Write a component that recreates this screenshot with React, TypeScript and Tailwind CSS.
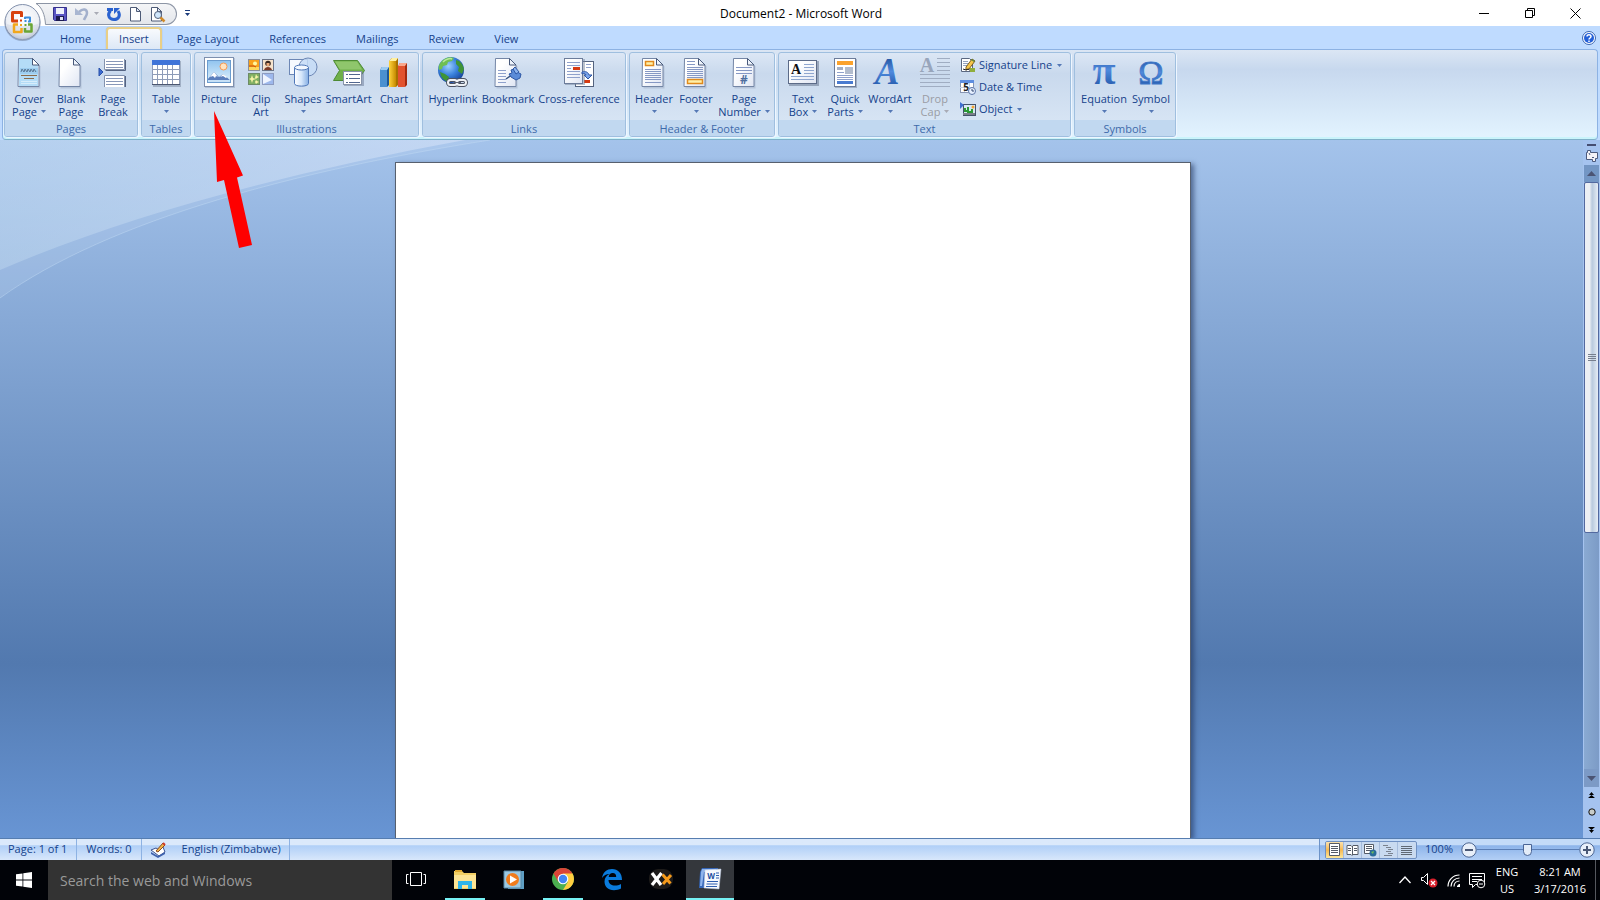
import type { ReactNode } from "react";
import { clsx } from "clsx";

/* ---------- small shared pieces ---------- */

const Caret = ({ muted = false }: { muted?: boolean }) => (
  <svg width="5" height="3" viewBox="0 0 5 3" className={clsx("inline-block shrink-0", muted ? "text-[#a9abb5]" : "text-[#5578b5]")} aria-hidden="true">
    <path d="M0 0h5L2.5 3z" fill="currentColor" />
  </svg>
);

const Icon = ({ children, size = 32 }: { children: ReactNode; size?: number }) => (
  <svg width={size} height={size} viewBox={`0 0 ${size} ${size}`} className="block shrink-0 overflow-visible" aria-hidden="true">
    {children}
  </svg>
);

const Defs = () => (
  <svg className="absolute h-0 w-0" aria-hidden="true">
    <defs>
      <linearGradient id="paper" x1="0" y1="0" x2="1" y2="1">
        <stop offset="0.3" stopColor="#ffffff" />
        <stop offset="1" stopColor="#dfe5f3" />
      </linearGradient>
      <linearGradient id="glyph" x1="0" y1="0" x2="0" y2="1">
        <stop offset="0.2" stopColor="#2a5ba8" />
        <stop offset="0.5" stopColor="#4f8ade" />
        <stop offset="0.8" stopColor="#2c62b4" />
      </linearGradient>
      <linearGradient id="gold" x1="0" y1="0" x2="1" y2="0">
        <stop offset="0" stopColor="#ffd33d" />
        <stop offset="1" stopColor="#c58a00" />
      </linearGradient>
      <linearGradient id="cyl" x1="0" y1="0" x2="1" y2="0">
        <stop offset="0" stopColor="#ffffff" />
        <stop offset="0.5" stopColor="#d5e6fb" />
        <stop offset="1" stopColor="#85aee3" />
      </linearGradient>
      <linearGradient id="sky" x1="0" y1="0" x2="0" y2="1">
        <stop offset="0" stopColor="#8fc3ef" />
        <stop offset="1" stopColor="#e2f3fd" />
      </linearGradient>
      <radialGradient id="globe" cx="0.4" cy="0.35" r="0.7">
        <stop offset="0" stopColor="#9dd0ff" />
        <stop offset="0.5" stopColor="#3b83dd" />
        <stop offset="1" stopColor="#123f94" />
      </radialGradient>
      <radialGradient id="orb" cx="0.5" cy="0.4" r="0.65">
        <stop offset="0" stopColor="#ffffff" />
        <stop offset="0.7" stopColor="#eceff5" />
        <stop offset="1" stopColor="#a9b4ca" />
      </radialGradient>
      <linearGradient id="bar" x1="0" y1="0" x2="0" y2="1">
        <stop offset="0" stopColor="#f4f5f7" />
        <stop offset="1" stopColor="#e3e6eb" />
      </linearGradient>
    </defs>
  </svg>
);

const Sheet = ({ x = 5, y = 2 }: { x?: number; y?: number }) => (
  <g transform={`translate(${x} ${y})`}>
    <path d="M1.5 1.5h14l7 7v22h-21z" fill="#9aa7bf" opacity="0.45" />
    <path d="M0.5 0.5h14l6.500 6.500v21.500h-21z" fill="url(#paper)" stroke="#7486a6" />
    <path d="M14.500 0.500v6.500h6.500z" fill="#eef3fb" stroke="#48597a" />
  </g>
);

const Lines = ({ x, y, w, n, gap = 3, color = "#7b8fbd" }: { x: number; y: number; w: number; n: number; gap?: number; color?: string }) => (
  <g fill={color}>
    {Array.from({ length: n }, (_, i) => (
      <rect key={i} x={x} y={y + i * gap} width={w} height="1" />
    ))}
  </g>
);

/* ---------- ribbon icons ---------- */

const CoverPageIcon = () => (
  <Icon>
    <Sheet />
    <path d="M6 3h13v6h6v21H6z" fill="#b4dcf7" />
    <path d="M19.500 2.500v6.500h6.500z" fill="#fff" stroke="#48597a" />
    <path d="M7 12h18v6H7z" fill="#9dcdef" />
    <path d="M8 16l1-3 2 3 1-3 2 3 1-3 2 3 1-3 2 3 1-3 2 3" fill="none" stroke="#5b7896" />
    <Lines x={8} y={19} w={16} n={1} color="#8a6b4c" />
    <Lines x={11} y={22} w={10} n={1} color="#8a6b4c" />
    <Lines x={8} y={25} w={16} n={2} gap={2} color="#d7ecfa" />
  </Icon>
);

const BlankPageIcon = () => (
  <Icon>
    <Sheet x={4} />
  </Icon>
);

const PageBreakIcon = () => (
  <Icon>
    <path d="M7.500 3v10.500h20V3" fill="#fff" stroke="#8392ae" />
    <path d="M28.500 4v10.500h-20" fill="none" stroke="#556482" />
    <Lines x={9} y={5} w={17} n={3} color="#8797b8" />
    <path d="M7.500 31v-11.500h20v11.500" fill="#fff" stroke="#8392ae" />
    <path d="M28.500 20v11" fill="none" stroke="#556482" />
    <Lines x={9} y={22} w={17} n={3} color="#8797b8" />
    <path d="M2 12l4 4-4 4z" fill="#3c6bd0" stroke="#2850a8" />
  </Icon>
);

const TableIcon = () => (
  <Icon>
    <path d="M3 5h28v26H3z" fill="#75839c" opacity="0.5" />
    <rect x="2" y="4" width="28" height="25" fill="#fff" />
    <rect x="2" y="4" width="28" height="5" fill="#3f74d8" />
    <path d="M2.500 9v19.500h27V9M2 13.500h28M2 18.500h28M2 23.500h28M7.500 9v20M12.500 9v20M17.500 9v20M22.500 9v20" fill="none" stroke="#8e9cb8" />
    <path d="M2 28.500h28" stroke="#4b5670" />
  </Icon>
);

const PictureIcon = () => (
  <Icon>
    <rect x="2" y="2" width="30" height="30" fill="#8391ad" opacity="0.4" />
    <rect x="1.500" y="1.500" width="29" height="29" fill="#fff" stroke="#7d8fae" />
    <rect x="4" y="4" width="24" height="23" fill="url(#sky)" />
    <circle cx="20.500" cy="10.500" r="3.500" fill="#ffe3c0" stroke="#f59a55" />
    <path d="M4 24l7-8 5 5 4-3 8 7v2H4z" fill="#5b7fbd" />
    <path d="M11 16l-4 5 3-1 2 2 1-2 2 1zM20 18l-3 3 3-1 3 2 1-1z" fill="#fff" />
    <rect x="4.500" y="4.500" width="23" height="22" fill="none" stroke="#6b9ccf" />
    <path d="M5 24h22v2H5z" fill="#c6e0f6" />
  </Icon>
);

const ClipArtIcon = () => (
  <Icon>
    <rect x="3.500" y="3.500" width="11" height="11" fill="#f9a11b" stroke="#8a8f9c" />
    <circle cx="10" cy="7.500" r="2" fill="#fff6a0" />
    <path d="M4 11h10v3H4z" fill="#ffd75a" />
    <path d="M4 10h5l2 1" stroke="#c54b0c" fill="none" />
    <rect x="17.500" y="3.500" width="11" height="11" fill="#f6e3cc" stroke="#6b7488" />
    <circle cx="23" cy="7.500" r="2.800" fill="#3c2a22" />
    <path d="M21.500 7h3v3h-3z" fill="#e9a878" />
    <path d="M19 14c1-4 7-4 8 0z" fill="#7c3b28" />
    <rect x="3.500" y="17.500" width="11" height="11" fill="#7fae62" stroke="#6d8a66" />
    <path d="M7 19l1 3 3 1-3 1-1 3-1-3-2-1 2-1zM11 18l1 2 2 1-2 1-1 1-1-1zM11 24l1 1 2 1-2 1-1 1-1-2z" fill="#f7f3a6" />
    <rect x="17.500" y="17.500" width="11" height="11" fill="#9db8ec" stroke="#8d9bc0" />
    <path d="M18 18l9 6-9 4z" fill="#eef4ff" />
  </Icon>
);

const ShapesIcon = () => (
  <Icon>
    <rect x="2.500" y="3.500" width="18" height="15" fill="#f6f9fe" stroke="#6d87b5" />
    <circle cx="21" cy="11" r="9" fill="#c5dcf7" fillOpacity="0.85" stroke="#6d87b5" />
    <path d="M7.500 11.500v16c0 3.500 14 3.500 14 0v-16z" fill="url(#cyl)" stroke="#4f77b8" />
    <ellipse cx="14.500" cy="11.500" rx="7" ry="2.500" fill="#f3f8ff" stroke="#4f77b8" />
  </Icon>
);

const SmartArtIcon = () => (
  <Icon>
    <path d="M0.500 4.500h24l7 10-7 10h-24l6-10z" fill="#6fb04a" stroke="#4d8a34" />
    <path d="M2 5.500h22l5 8H7z" fill="#8fc66c" />
    <rect x="11" y="16" width="20" height="14" fill="#6a7894" opacity="0.5" />
    <rect x="10.500" y="15.500" width="18" height="13" fill="#fff" stroke="#8894aa" />
    <Lines x={13} y={18} w={2} n={3} gap={4} color="#52678f" />
    <Lines x={16} y={18} w={11} n={3} gap={4} color="#52678f" />
  </Icon>
);

const ChartIcon = () => (
  <Icon>
    <path d="M2 14l2-3h7v18l-2 2H2z" fill="#1d5796" />
    <path d="M2 14h7v17H2z" fill="#4a90d0" />
    <path d="M2 14l2-3h7l-2 3z" fill="#9bcbf2" />
    <path d="M11 5l3-3h6v27l-2 2h-7z" fill="#a87000" />
    <path d="M11 5h7v26h-7z" fill="url(#gold)" />
    <path d="M11 5l3-3h6l-2 3z" fill="#fff0a0" />
    <path d="M20 10l2-3h7v22l-2 2h-7z" fill="#a32a10" />
    <path d="M20 10h7v21h-7z" fill="#e2532f" />
    <path d="M20 10l2-3h7l-2 3z" fill="#f9a78c" />
  </Icon>
);

const HyperlinkIcon = () => (
  <Icon>
    <circle cx="14" cy="14" r="13" fill="url(#globe)" />
    <path d="M4 6c3-4 9-6 13-4l-2 3-4 1-1 3-4 1-1 3-3 1c-1-3 0-6 2-8z" fill="#6fbf52" />
    <path d="M19 4c5 1 7 5 8 9l-2 5-4-3 1-4-3-3zM3 16l5 2 4 3-1 5c-5-2-7-5-8-10z" fill="#3f9437" />
    <path d="M6 6c3-3 7-4 9-3" stroke="#b9e89b" strokeWidth="1.500" fill="none" />
    <g fill="none" stroke="#4b5262" strokeWidth="4">
      <rect x="11" y="24" width="9" height="5" rx="2.500" />
      <rect x="20" y="24" width="9" height="5" rx="2.500" />
    </g>
    <g fill="none" stroke="#eef1f5" strokeWidth="2">
      <rect x="11" y="24" width="9" height="5" rx="2.500" />
      <rect x="20" y="24" width="9" height="5" rx="2.500" />
    </g>
    <path d="M17 26.500h7" stroke="#596072" />
  </Icon>
);

const BookmarkIcon = () => (
  <Icon>
    <Sheet x={3} />
    <Lines x={6} y={14} w={8} n={5} color="#8fa1cc" />
    <path d="M14 23l7-5" stroke="#37537f" strokeWidth="1.500" />
    <path d="M19 14l3-1 5 4 2 1-1 4-4 2-5-3-2-3 3-1z" fill="#5b8bd8" stroke="#2e57a5" />
    <path d="M23 11l4 5-3 2-3-5z" fill="#8db4ee" stroke="#2e57a5" />
  </Icon>
);

const CrossReferenceIcon = () => (
  <Icon>
    <rect x="12.500" y="5.500" width="18" height="25" fill="#fff" stroke="#54637f" />
    <Lines x={23} y={8} w={5} n={2} color="#8fa1cc" />
    <rect x="21" y="24" width="6" height="3" fill="#d63a12" />
    <rect x="2" y="3" width="20" height="26" fill="#75839c" opacity="0.5" />
    <rect x="1.500" y="2.500" width="18" height="25" fill="url(#paper)" stroke="#6c7c9a" />
    <Lines x={4} y={6} w={13} n={2} color="#8fa1cc" />
    <Lines x={4} y={15} w={13} n={3} color="#8fa1cc" />
    <Lines x={4} y={12} w={4} n={1} color="#8fa1cc" />
    <rect x="10" y="11" width="7" height="3" fill="#d63a12" />
    <path d="M19 16c4-1 6 0 7 3h3l-4 4-4-4h2c-1-2-2-2-4-1z" fill="#7ba4ea" stroke="#2e57a5" />
  </Icon>
);

const HeaderIcon = () => (
  <Icon>
    <Sheet x={4} />
    <Lines x={7} y={13} w={16} n={6} color="#8698c4" gap={2} />
    <Lines x={7} y={26} w={16} n={1} color="#8698c4" />
    <rect x="7.500" y="5.500" width="8" height="4" fill="#fff0a8" stroke="#e08a1c" strokeWidth="1.500" />
  </Icon>
);

const FooterIcon = () => (
  <Icon>
    <Sheet x={4} />
    <Lines x={7} y={5} w={8} n={2} color="#8698c4" />
    <Lines x={7} y={11} w={16} n={6} gap={2} color="#8698c4" />
    <rect x="7.500" y="23.500" width="15" height="4" fill="#fff0a8" stroke="#e08a1c" strokeWidth="1.500" />
  </Icon>
);

const PageNumberIcon = () => (
  <Icon>
    <Sheet x={5} />
    <Lines x={8} y={11} w={16} n={3} color="#8698c4" />
    <text x="16" y="28" textAnchor="middle" fontSize="12" fontWeight="bold" fill="#4f6f9f">#</text>
  </Icon>
);

const TextBoxIcon = () => (
  <Icon>
    <rect x="2" y="5" width="30" height="25" fill="#5f6d87" opacity="0.5" />
    <rect x="1.500" y="4.500" width="28" height="23" fill="url(#paper)" stroke="#5c6b88" />
    <text x="9" y="18" textAnchor="middle" fontSize="14" fontWeight="bold" fontFamily="Liberation Serif, serif" fill="#111">A</text>
    <Lines x={17} y={8} w={10} n={4} color="#8fa6cf" />
    <Lines x={4} y={20} w={23} n={2} color="#8fa6cf" />
  </Icon>
);

const QuickPartsIcon = () => (
  <Icon>
    <rect x="6" y="3" width="22" height="29" fill="#75839c" opacity="0.5" />
    <rect x="5.500" y="2.500" width="21" height="28" fill="#fff" stroke="#6c7c9a" />
    <rect x="8" y="5" width="16" height="4" fill="#fba22c" />
    <rect x="8" y="11" width="6" height="3" fill="#a5b0c4" />
    <rect x="16" y="11" width="8" height="7" fill="#b2bccd" />
    <Lines x={8} y={16} w={7} n={1} color="#8fa1cc" />
    <Lines x={8} y={19} w={16} n={3} gap={2} color="#8fa1cc" />
    <rect x="8" y="25" width="16" height="3" fill="#4a7bd0" />
  </Icon>
);

const WordArtIcon = () => (
  <Icon>
    <text x="13" y="28" textAnchor="middle" fontSize="37" fontWeight="bold" fontStyle="italic" fontFamily="Liberation Serif, serif" fill="url(#glyph)">A</text>
  </Icon>
);

const DropCapIcon = () => (
  <Icon>
    <text x="8" y="16" textAnchor="middle" fontSize="20" fontWeight="bold" fontFamily="Liberation Serif, serif" fill="#98a5bb">A</text>
    <Lines x={18} y={2} w={13} n={4} gap={4} color="#a0adc2" />
    <Lines x={1} y={18} w={30} n={4} gap={4} color="#a0adc2" />
  </Icon>
);

const EquationIcon = () => (
  <Icon>
    <text x="16" y="28" textAnchor="middle" fontSize="42" fontWeight="bold" fontFamily="Liberation Serif, serif" fill="url(#glyph)">π</text>
  </Icon>
);

const SymbolIcon = () => (
  <Icon>
    <text x="16" y="28" textAnchor="middle" fontSize="34" fontFamily="Liberation Serif, serif" fill="url(#glyph)" stroke="#3f78c8" strokeWidth="0.800">Ω</text>
  </Icon>
);

const SignatureIcon = () => (
  <Icon size={16}>
    <path d="M1.500 1.500h8l3 3v10h-11z" fill="#fff" stroke="#5a6780" />
    <Lines x={3} y={4} w={5} n={3} gap={2} color="#93a2bf" />
    <path d="M6 10l6-8 3 2-6 8-3 1z" fill="#f6c64a" stroke="#7a5a20" />
    <path d="M12 2l3 2-1 1-3-2z" fill="#5d8a3c" />
    <path d="M3 12l3 1 2-1 3 2h4" stroke="#222" fill="none" />
    <rect x="10" y="11" width="5" height="4" fill="#8fae3c" />
  </Icon>
);

const DateIcon = () => (
  <Icon size={16}>
    <rect x="0.500" y="1.500" width="13" height="12" fill="#fff" stroke="#8896b3" />
    <rect x="0" y="1" width="14" height="3" fill="#5e8ee0" />
    <path d="M0 8.500h13M4.500 4v9M9.500 4v9" stroke="#c4cee0" />
    <text x="6" y="12" textAnchor="middle" fontSize="10" fontWeight="bold" fill="#222">5</text>
    <circle cx="12" cy="12" r="3.500" fill="#e6f0ff" stroke="#5d76a8" />
    <path d="M12 10v2h2" stroke="#33476f" fill="none" />
  </Icon>
);

const ObjectIcon = () => (
  <Icon size={16}>
    <rect x="3.500" y="3.500" width="12" height="11" fill="#d8e8f2" stroke="#44536b" />
    <path d="M0 1l4 3-4 4z" fill="#3f6fd0" />
    <circle cx="13" cy="6" r="1.500" fill="#f4a233" />
    <path d="M8 13V6M8 10H5V7M8 11h4V8" stroke="#2c9a35" strokeWidth="2" fill="none" />
    <path d="M3 13h12" stroke="#7a7f88" strokeWidth="2" />
  </Icon>
);

/* ---------- ribbon layout ---------- */

type RibbonItem = {
  label: string[];
  icon: ReactNode;
  menu?: "inline" | "below";
  width?: string;
  disabled?: boolean;
};

const RibbonButton = ({ label, icon, menu, width = "w-[42px]", disabled }: RibbonItem) => (
  <button
    type="button"
    disabled={disabled}
    className={clsx("flex shrink-0 flex-col items-center pt-[3px] leading-[13px] whitespace-nowrap", width, disabled ? "text-[#9a9ca4]" : "text-[#15428b]")}
  >
    {icon}
    <span className="mt-1">{label[0]}</span>
    {label[1] && (
      <span className="flex items-center gap-1">
        {label[1]}
        {menu === "inline" && <Caret muted={disabled} />}
      </span>
    )}
    {menu === "below" && (
      <span className="flex h-[13px] items-center">
        <Caret />
      </span>
    )}
  </button>
);

const RibbonGroup = ({ title, children }: { title: string; children: ReactNode }) => (
  <section className="flex shrink-0 flex-col overflow-hidden rounded-[3px] border border-[#9fbfdf] bg-linear-to-b from-[#dce7f5] via-[#c9d9ed] via-25% to-[#dbe8f6] shadow-[1px_1px_0_#eef6ff]">
    <div className="flex flex-1 px-[3px]">{children}</div>
    <h2 className="h-4 bg-[#c1d8f0] text-center leading-[17px] text-[#3e6aaa]">{title}</h2>
  </section>
);

const groups: { title: string; items: RibbonItem[] }[] = [
  {
    title: "Pages",
    items: [
      { label: ["Cover", "Page"], icon: <CoverPageIcon />, menu: "inline" },
      { label: ["Blank", "Page"], icon: <BlankPageIcon /> },
      { label: ["Page", "Break"], icon: <PageBreakIcon /> },
    ],
  },
  { title: "Tables", items: [{ label: ["Table"], icon: <TableIcon />, menu: "below" }] },
  {
    title: "Illustrations",
    items: [
      { label: ["Picture"], icon: <PictureIcon /> },
      { label: ["Clip", "Art"], icon: <ClipArtIcon /> },
      { label: ["Shapes"], icon: <ShapesIcon />, menu: "below" },
      { label: ["SmartArt"], icon: <SmartArtIcon />, width: "w-[49px]" },
      { label: ["Chart"], icon: <ChartIcon /> },
    ],
  },
  {
    title: "Links",
    items: [
      { label: ["Hyperlink"], icon: <HyperlinkIcon />, width: "w-[54px]" },
      { label: ["Bookmark"], icon: <BookmarkIcon />, width: "w-14" },
      { label: ["Cross-reference"], icon: <CrossReferenceIcon />, width: "w-[86px]" },
    ],
  },
  {
    title: "Header & Footer",
    items: [
      { label: ["Header"], icon: <HeaderIcon />, menu: "below" },
      { label: ["Footer"], icon: <FooterIcon />, menu: "below" },
      { label: ["Page", "Number"], icon: <PageNumberIcon />, menu: "inline", width: "w-[54px]" },
    ],
  },
];

const textItems: RibbonItem[] = [
  { label: ["Text", "Box"], icon: <TextBoxIcon />, menu: "inline" },
  { label: ["Quick", "Parts"], icon: <QuickPartsIcon />, menu: "inline" },
  { label: ["WordArt"], icon: <WordArtIcon />, menu: "below", width: "w-12" },
  { label: ["Drop", "Cap"], icon: <DropCapIcon />, menu: "inline", disabled: true },
];

const smallItems = [
  { label: "Signature Line", icon: <SignatureIcon />, menu: true },
  { label: "Date & Time", icon: <DateIcon />, menu: false },
  { label: "Object", icon: <ObjectIcon />, menu: true },
];

const Ribbon = () => (
  <div className="mx-[2px] flex h-[91px] shrink-0 gap-[3px] rounded-[4px] border border-[#8db2e3] border-b-[#7fb0c8] bg-linear-to-b from-[#dbe6f4] via-[#c7d8ee] via-22% to-[#e3f4ff] px-px py-[2px] text-[11px] shadow-[inset_0_-2px_0_#c9f4fb]">
    {groups.map((group) => (
      <RibbonGroup key={group.title} title={group.title}>
        {group.items.map((item) => (
          <RibbonButton key={item.label.join(" ")} {...item} />
        ))}
      </RibbonGroup>
    ))}
    <RibbonGroup title="Text">
      {textItems.map((item) => (
        <RibbonButton key={item.label.join(" ")} {...item} />
      ))}
      <div className="flex w-[111px] flex-col pt-px pl-1">
        {smallItems.map((item) => (
          <button key={item.label} type="button" className="flex h-[22px] items-center gap-[3px] whitespace-nowrap text-[#15428b]">
            {item.icon}
            <span className="mr-[2px]">{item.label}</span>
            {item.menu && <Caret />}
          </button>
        ))}
      </div>
    </RibbonGroup>
    <RibbonGroup title="Symbols">
      <RibbonButton label={["Equation"]} icon={<EquationIcon />} menu="below" width="w-[52px]" />
      <RibbonButton label={["Symbol"]} icon={<SymbolIcon />} menu="below" />
    </RibbonGroup>
  </div>
);

/* ---------- title bar and tabs ---------- */

const OfficeButton = () => (
  <button type="button" aria-label="Office Button" className="absolute top-1 left-1 z-10">
    <svg width="38" height="38" viewBox="0 0 38 38" className="block" aria-hidden="true">
      <circle cx="18.500" cy="19" r="18" fill="#7787a3" opacity="0.6" />
      <circle cx="18.500" cy="18" r="17.500" fill="url(#orb)" stroke="#8391ac" />
      <path d="M3 20c8 3 22 3 31 0a15.500 15.500 0 0 1-31 0z" fill="#c3cbda" opacity="0.4" />
      <g fill="none" strokeLinejoin="round">
        <path d="M17.500 13V8.500h-9v8.500H14" stroke="#d8420e" strokeWidth="3" />
        <path d="M21 15v-1.500h5v4H24" stroke="#3b8ede" strokeWidth="2" />
        <path d="M14 20.500H10v7.500h7.500v-4" stroke="#f2a71b" strokeWidth="2.500" />
        <path d="M24 20.500h3.500v7H21v-3.500" stroke="#6aa535" strokeWidth="2.500" />
      </g>
      <path d="M16 15.500h2v2h-2z" fill="#d8420e" />
      <path d="M20.500 16h2v2h-2z" fill="#3b8ede" />
      <path d="M16 20h2v2h-2z" fill="#f2a71b" />
      <path d="M20.500 20h2v2h-2z" fill="#6aa535" />
    </svg>
  </button>
);

const QuickAccess = () => (
  <div className="flex">
    <svg width="10" height="22" viewBox="0 0 10 22" className="block" aria-hidden="true">
      <path d="M0 0.500H10V21.500H9.500C9 12 6 4 0 0.500z" fill="url(#bar)" />
      <path d="M10 0.500H0C6 4 9 12 9.500 21.500H10" fill="none" stroke="#8c95a5" />
    </svg>
    <div className="flex h-[22px] items-center rounded-r-full border border-l-0 border-[#8c95a5] bg-linear-to-b from-[#f4f5f7] to-[#e3e6eb] pr-[11px] pl-[6px]">
      <button type="button" aria-label="Save">
        <Icon size={16}>
          <path d="M1.500 1.500h13v13h-12l-1-1z" fill="#5a55c4" stroke="#35318c" />
          <rect x="4" y="2" width="8" height="6" fill="#eef0fb" />
          <rect x="4" y="10" width="8" height="5" fill="#1d1b50" />
          <rect x="8" y="11" width="3" height="3" fill="#dfe2f4" />
        </Icon>
      </button>
      <button type="button" aria-label="Undo" disabled className="ml-[6px] flex items-center gap-1">
        <Icon size={16}>
          <path d="M5 6c4-4 8-3 8 1 0 3-2 4-3 7" fill="none" stroke="#a3b0cc" strokeWidth="2.500" />
          <path d="M1 2v7h8z" fill="#a9b6d1" />
        </Icon>
        <Caret muted />
      </button>
      <button type="button" aria-label="Repeat" className="ml-[7px]">
        <Icon size={16}>
          <path d="M4.500 4.500c-4 5-1 9 3.500 9s7-4 4-8.500" fill="none" stroke="#2a62cf" strokeWidth="3" />
          <path d="M1 2h6v3H1zM8 2h6L8 8z" fill="#2a62cf" />
        </Icon>
      </button>
      <button type="button" aria-label="New" className="ml-[5px]">
        <Icon size={16}>
          <path d="M3.500 1.500h6l4 4v9.500h-10z" fill="#fff" stroke="#4e5b76" />
          <path d="M9.500 1.500v4h4z" fill="#dbe4f4" stroke="#4e5b76" />
        </Icon>
      </button>
      <button type="button" aria-label="Print Preview" className="ml-[6px]">
        <Icon size={16}>
          <path d="M2.500 1.500h6l4 4v9.500h-10z" fill="#fff" stroke="#4e5b76" />
          <path d="M8.500 1.500v4h4z" fill="#dbe4f4" stroke="#4e5b76" />
          <circle cx="9" cy="9" r="3.500" fill="#cfe6fb" stroke="#55627c" />
          <path d="M11.500 11.500l4 4" stroke="#d08a2a" strokeWidth="2.500" />
        </Icon>
      </button>
    </div>
  </div>
);

const TitleBar = () => (
  <header className="flex h-[26px] shrink-0 items-center bg-white">
    <div className="flex flex-1 items-center">
      <div className="ml-9 pt-px">
        <QuickAccess />
      </div>
      <button type="button" aria-label="Customize Quick Access Toolbar" className="ml-[7px] p-px">
        <svg width="5" height="6" viewBox="0 0 5 6" aria-hidden="true">
          <path d="M0 0h5v1H0zM0 3h5L2.500 6z" fill="#1c3c7c" />
        </svg>
      </button>
    </div>
    <h1 className="pt-px pl-1 text-[12px] text-black">Document2 - Microsoft Word</h1>
    <div className="flex flex-1 justify-end pr-[2px]">
      <button type="button" aria-label="Minimize" className="flex h-6 w-[45px] items-center justify-center">
        <svg width="11" height="11" viewBox="0 0 11 11"><path d="M0 5.500h10" stroke="#000" /></svg>
      </button>
      <button type="button" aria-label="Restore" className="flex h-6 w-[46px] items-center justify-center">
        <svg width="11" height="11" viewBox="0 0 11 11"><path d="M0.500 2.500h7v7h-7zM2.500 2V0.500h7v7H8" stroke="#000" fill="none" /></svg>
      </button>
      <button type="button" aria-label="Close" className="flex h-6 w-[45px] items-center justify-center">
        <svg width="11" height="11" viewBox="0 0 11 11"><path d="M0.500 0.500l10 10M10.500 0.500l-10 10" stroke="#000" /></svg>
      </button>
    </div>
  </header>
);

const tabs = ["Home", "Insert", "Page Layout", "References", "Mailings", "Review", "View"];

const TabBar = () => (
  <nav className="flex h-[23px] shrink-0 bg-[#bfdbff] pl-[45px] text-[11px] text-[#15428b]">
    {tabs.map((tab) => (
      <button
        key={tab}
        type="button"
        className={clsx(
          "whitespace-nowrap",
          tab === "Insert"
            ? "mt-px rounded-t-[4px] border-2 border-b-0 border-[#e9cf86] bg-linear-to-b from-[#f8fafd] to-[#dde8f6] px-[11px] shadow-[0_0_1px_#8a8f99]"
            : "px-[15px] pt-[3px]"
        )}
      >
        {tab}
      </button>
    ))}
    <button type="button" aria-label="Help" className="mr-1 ml-auto">
      <svg width="14" height="14" viewBox="0 0 14 14" aria-hidden="true">
        <circle cx="7" cy="7" r="6.500" fill="#fff" stroke="#3b66b0" />
        <circle cx="7" cy="7" r="5" fill="#2460d8" />
        <path d="M5 5.500C5 3 9 3 9 5.500 9 7 7 7 7 8.500M7 9.500v1.500" stroke="#fff" strokeWidth="1.500" fill="none" />
      </svg>
    </button>
  </nav>
);

/* ---------- document area ---------- */

const ScrollBar = () => (
  <aside className="flex w-[17px] shrink-0 flex-col items-center bg-[#a5c3ef] pt-1">
    <div className="h-[2px] w-[9px] shrink-0 bg-[#454e72]" />
    <button type="button" aria-label="View Ruler" className="mt-1 mb-[3px] shrink-0">
      <svg width="12" height="12" viewBox="0 0 12 12" className="block" aria-hidden="true">
        <path d="M0.500 2.500h1v-2h3v2h7v6h-2v3h-3v-2h-6z" fill="#f4f2f6" stroke="#4c5a7c" />
        <path d="M3 3l1 2M6 7l1 1 1-1" stroke="#4c5a7c" fill="none" />
      </svg>
    </button>
    <div className="flex min-h-0 w-[15px] flex-1 flex-col bg-linear-to-r from-[#8aaad2] to-[#7c9bc6]">
      <button type="button" aria-label="Scroll up" className="flex h-[17px] shrink-0 items-center justify-center bg-[#7396c4]">
        <svg width="9" height="5" viewBox="0 0 9 5"><path d="M0 5h9L4.500 0z" fill="#4b5474" /></svg>
      </button>
      <div className="flex h-[56.5%] items-center justify-center rounded-[2px] border border-[#53699f] bg-linear-to-r from-[#eceff4] from-35% via-[#b9cade] via-55% to-[#e6edf5]">
        <svg width="8" height="8" viewBox="0 0 8 8"><path d="M0 0.500h8M0 2.500h8M0 4.500h8M0 6.500h8" stroke="#777f8e" /></svg>
      </div>
      <button type="button" aria-label="Scroll down" className="mt-auto flex h-[18px] shrink-0 items-center justify-center bg-[#7c9ac6]">
        <svg width="9" height="5" viewBox="0 0 9 5"><path d="M0 0h9L4.500 5z" fill="#4b5474" /></svg>
      </button>
    </div>
    <div className="flex h-[51px] shrink-0 flex-col items-center justify-around">
      <button type="button" aria-label="Previous Page">
        <svg width="7" height="6" viewBox="0 0 7 6" className="block"><path d="M1 3l2.500-3L6 3zM0 6l3.500-3L7 6z" fill="#000" /></svg>
      </button>
      <button type="button" aria-label="Select Browse Object">
        <svg width="8" height="8" viewBox="0 0 8 8" className="block"><circle cx="4" cy="4" r="3.200" fill="#c8ccc8" stroke="#111" /></svg>
      </button>
      <button type="button" aria-label="Next Page">
        <svg width="7" height="6" viewBox="0 0 7 6" className="block"><path d="M0 0h7L3.500 3zM1 3h5L3.500 6z" fill="#000" /></svg>
      </button>
    </div>
  </aside>
);

const Workspace = () => (
  <div className="flex min-h-0 flex-1">
    <main className="relative flex flex-1 overflow-hidden bg-linear-to-b from-[#a4c3eb] via-[#5279af] via-75% to-[#6895d4] pt-[22px] pl-[3px]">
      <svg width="520" height="160" viewBox="0 0 520 160" className="absolute top-0 left-0" aria-hidden="true">
        <defs>
          <linearGradient id="swoosh" x1="0" y1="0" x2="1" y2="0">
            <stop offset="0" stopColor="#c6def2" stopOpacity="0.380" />
            <stop offset="1" stopColor="#dce6fa" stopOpacity="0.500" />
          </linearGradient>
        </defs>
        <path d="M0 158C110 79 300 30 490 0H0z" fill="#c8ddf4" fillOpacity="0.200" />
        <path d="M0 158C110 79 300 30 490 0" fill="none" stroke="#c4dbf5" strokeOpacity="0.450" />
        <path d="M0 130C120 78 280 34 465 0H0z" fill="url(#swoosh)" />
      </svg>
      <article aria-label="Document page" className="relative mx-auto w-[796px] border border-b-0 border-[#57606e] bg-white shadow-[3px_2px_5px_rgba(30,50,90,0.6)]" />
    </main>
    <ScrollBar />
  </div>
);

/* ---------- status bar ---------- */

const viewModes = [
  { name: "Print Layout", icon: <path d="M3.500 1.500h10v12h-10zM5 4.500h7M5 6.500h7M5 8.500h7M5 10.500h7" fill="#fff" stroke="#555b66" /> },
  { name: "Full Screen Reading", icon: <path d="M3 3.500h4l1 1 1-1h5v9H9l-1 1-1-1H3zM8.500 4v9M4 6.500h3M4 8.500h3M10 6.500h3M10 8.500h3" fill="#fff" stroke="#555b66" /> },
  {
    name: "Web Layout",
    icon: (
      <>
        <path d="M2.500 2.500h9v9h-9zM4 4.500h6M4 6.500h6M4 8.500h6" fill="#fff" stroke="#555b66" />
        <circle cx="11" cy="11" r="3.500" fill="#2b6c9a" />
        <path d="M9 10l3-1-1 3z" fill="#6fbf5a" />
      </>
    ),
  },
  { name: "Outline", icon: <path d="M3 3.500h5M6 5.500h5M8 7.500h5M6 9.500h5M8 11.500h5M4 13.500h8" stroke="#7a828f" /> },
  { name: "Draft", icon: <path d="M3 4.500h11M3 6.500h11M3 8.500h11M3 10.500h11M3 12.500h11" stroke="#5f6874" /> },
];

const ZoomButton = ({ plus = false }: { plus?: boolean }) => (
  <button type="button" aria-label={plus ? "Zoom In" : "Zoom Out"}>
    <svg width="16" height="16" viewBox="0 0 16 16" className="block">
      <circle cx="8" cy="8" r="7.200" fill="#e8eff9" stroke="#4c6591" />
      <path d={plus ? "M4 8h8M8 4v8" : "M4 8h8"} stroke="#4a5875" strokeWidth="2" />
    </svg>
  </button>
);

const StatusBar = () => (
  <footer className="flex h-[22px] shrink-0 border-t border-[#567db0] bg-linear-to-b from-[#dbe9fb] from-28% via-[#b0cff7] via-32% to-[#d8e7fb] text-[11px] text-[#15428b]">
    <button type="button" className="border-r border-[#8db2e3] pr-[9px] pl-2">Page: 1 of 1</button>
    <button type="button" className="border-r border-[#8db2e3] px-[9px]">Words: 0</button>
    <button type="button" aria-label="Proofing" className="px-2">
      <Icon size={16}>
        <path d="M1 8l5-2 3 2 4-3 2 5-6 4z" fill="#fff" stroke="#3d5390" />
        <path d="M1 10l7 4 7-4v2l-7 4-7-4z" fill="#3f62ad" />
        <path d="M6 9l7-8 2 2-7 7z" fill="#f0b54a" stroke="#8a4a22" />
        <path d="M13 1l2 2" stroke="#d0392b" strokeWidth="2" />
      </Icon>
    </button>
    <button type="button" className="border-r border-[#8db2e3] px-2">English (Zimbabwe)</button>
    <div className="ml-auto flex items-center border-l border-[#6d93c8] bg-linear-to-b from-[#c4dbf8] from-28% via-[#8db4ea] via-32% to-[#b3cff5] px-[5px]">
      <div className="flex h-[18px] overflow-hidden rounded-[2px] border border-[#6f90c2] bg-[#c9daf0]">
        {viewModes.map((mode, i) => (
          <button key={mode.name} type="button" aria-label={mode.name} className={clsx("w-[18px] border-r border-[#a6bcdc] last:border-r-0", i === 0 && "bg-linear-to-b from-[#fbe2ac] via-[#f5b84f] to-[#fde79a]")}>
            <Icon size={16}>{mode.icon}</Icon>
          </button>
        ))}
      </div>
      <button type="button" className="w-11 text-center">100%</button>
      <ZoomButton />
      <input
        type="range"
        aria-label="Zoom"
        defaultValue={49}
        className="h-4 w-[102px] appearance-none bg-[linear-gradient(#5b7eb5,#5b7eb5)] bg-[length:100%_1px] bg-center bg-no-repeat [&::-webkit-slider-thumb]:h-3 [&::-webkit-slider-thumb]:w-[9px] [&::-webkit-slider-thumb]:appearance-none [&::-webkit-slider-thumb]:rounded-b-full [&::-webkit-slider-thumb]:border [&::-webkit-slider-thumb]:border-[#4a6596] [&::-webkit-slider-thumb]:bg-[#e3ecf8]"
      />
      <ZoomButton plus />
    </div>
  </footer>
);

/* ---------- windows taskbar ---------- */

const TaskButton = ({ name, open, active, children }: { name: string; open?: boolean; active?: boolean; children: ReactNode }) => (
  <button
    type="button"
    aria-label={name}
    className={clsx("flex h-10 items-center justify-center border-b-2", active ? "w-12 bg-[#34373c]" : "mx-1 w-10", open ? "border-[#76f1f4]" : "border-transparent")}
  >
    <svg width="24" height="24" viewBox="0 0 24 24" aria-hidden="true">
      {children}
    </svg>
  </button>
);

const Taskbar = () => (
  <div className="flex h-10 shrink-0 bg-[#010308] text-white">
    <button type="button" aria-label="Start" className="flex w-12 items-center justify-center">
      <svg width="16" height="16" viewBox="0 0 16 16"><path d="M0 2.300l6.500-.9v6.200H0zM7.300 1.300L16 0v7.600H7.300zM0 8.400h6.500v6.200L0 13.700zM7.300 8.400H16V16l-8.700-1.300z" fill="#fff" /></svg>
    </button>
    <input type="text" aria-label="Search the web and Windows" placeholder="Search the web and Windows" className="w-[344px] bg-[#333333] px-3 text-[14px] text-white outline-none placeholder:text-[#9a9a9a]" />
    <div className="flex gap-px">
      <TaskButton name="Task View">
        <path d="M6.500 5.500h11v13h-11z" fill="none" stroke="#fff" />
        <path d="M4.500 7.500h-2v9h2M19.500 7.500h2v9h-2" fill="none" stroke="#fff" />
      </TaskButton>
      <TaskButton name="File Explorer" open>
        <path d="M1 4h8l2 2h12v16H1z" fill="#f2cf63" />
        <path d="M2 3h7v2H2z" fill="#e0a92f" />
        <path d="M1 8h22v13H1z" fill="#fce493" />
        <path d="M5 14h14v8h-4v-4H9v4H5z" fill="#2fb4ea" />
      </TaskButton>
      <TaskButton name="Windows Media Player">
        <path d="M6 4h16v18H6z" fill="#5e9fc4" />
        <path d="M2 4h17v17H2z" fill="#9cc9e2" stroke="#5687a5" />
        <circle cx="10.500" cy="12.500" r="6.500" fill="#f07c1d" />
        <path d="M8 8.500l7 4-7 4z" fill="#fff" />
      </TaskButton>
      <TaskButton name="Google Chrome" open>
        <circle cx="12" cy="12" r="11" fill="#4caf50" />
        <path d="M12 12L2.500 6.500A11 11 0 0 1 21.500 6.500z" fill="#db4437" />
        <path d="M12 6.500h9.500A11 11 0 0 1 12 23l4.800-8z" fill="#ffcd40" />
        <path d="M2.500 6.500L7.200 14.800 12 7z" fill="#db4437" />
        <circle cx="12" cy="12" r="5.300" fill="#fff" />
        <circle cx="12" cy="12" r="4.200" fill="#4285f4" />
      </TaskButton>
      <TaskButton name="Microsoft Edge">
        <path d="M2 11C3 5 7 2 12 2c6 0 10 4 10 11H8.500c.2 4 3 5.500 6.500 5.500 2.200 0 4-.5 6-1.600v4.600c-2 1.200-4.500 1.700-7 1.700-6 0-9.500-3.500-9.500-8.700C4.500 11 6.500 8.300 9.500 7 6 7 4 8.500 2 11zM8.700 10h7.500c0-2.500-1.200-4-3.500-4-2.200 0-3.700 1.500-4 4z" fill="#0a7bdc" />
      </TaskButton>
      <TaskButton name="Media Converter">
        <rect x="0" y="2" width="24" height="20" rx="9" fill="#1d1b1a" />
        <path d="M13.500 7.500l8 9M22 8l-8 9" stroke="#f59a1b" strokeWidth="3" />
        <path d="M3 6l9 12M12.500 6L3 18" stroke="#fff" strokeWidth="3.200" />
      </TaskButton>
      <TaskButton name="Microsoft Word" open active>
        <path d="M4 1h16l-2 20H1L2 5z" fill="#3566b8" />
        <path d="M4 2h14l-1 3H6L4 19H2L3 5z" fill="#8fb4ec" />
        <path d="M7 3l16-1-2 20-15-1z" fill="#f5f8fd" stroke="#b8c7e0" strokeWidth="0.500" />
        <text x="13" y="12" textAnchor="middle" fontSize="8" fontWeight="bold" fill="#1f4fa0">W</text>
        <path d="M18 6h3M18 8.500h3M18 11h3M9 14.500h11M8.500 17h11M8 19.500h11" stroke="#2d5db0" />
      </TaskButton>
    </div>
    <div className="ml-auto flex items-center">
      <button type="button" aria-label="Show hidden icons" className="w-6">
        <svg width="12" height="8" viewBox="0 0 12 8" className="mx-auto"><path d="M0.500 7L6 1l5.500 6" fill="none" stroke="#fff" strokeWidth="1.300" /></svg>
      </button>
      <button type="button" aria-label="Volume muted" className="w-6">
        <svg width="17" height="16" viewBox="0 0 17 16" className="mx-auto">
          <path d="M0.500 5.500h2l4-4v11l-4-4h-2z" fill="none" stroke="#fff" />
          <circle cx="12" cy="11" r="4.500" fill="#d8202c" />
          <path d="M10 9l4 4M14 9l-4 4" stroke="#fff" strokeWidth="1.300" />
        </svg>
      </button>
      <button type="button" aria-label="Network" className="w-6">
        <svg width="13" height="13" viewBox="0 0 13 13" className="mx-auto">
          <path d="M1 12.500C1 6 6 1 12.500 1M4 12.500C4 7.500 8 4 12.500 4M7 12.500C7 9 9.500 7 12.500 7" fill="none" stroke="#fff" strokeWidth="1.200" />
          <path d="M10 13v-1l2-2h1v3z" fill="#fff" />
        </svg>
      </button>
      <button type="button" aria-label="Action Center" className="w-6">
        <svg width="17" height="17" viewBox="0 0 17 17" className="mx-auto">
          <path d="M0.500 1.500h15v11h-9l-3 3v-3h-3z" fill="none" stroke="#fff" />
          <path d="M3 4.500h10M3 7.500h10M3 9.500h5" stroke="#fff" />
          <circle cx="12" cy="12" r="3.800" fill="#010308" stroke="#fff" />
          <path d="M10 12h4" stroke="#fff" />
        </svg>
      </button>
      <button type="button" className="w-9 text-center text-[11px] leading-[17px]">
        <span className="block">ENG</span>
        <span className="block">US</span>
      </button>
      <button type="button" className="w-[70px] text-center text-[11px] leading-[17px]">
        <span className="block">8:21 AM</span>
        <span className="block">3/17/2016</span>
      </button>
      <button type="button" aria-label="Show desktop" className="h-10 w-[5px] border-l border-[#55585e]" />
    </div>
  </div>
);

const PointerArrow = () => (
  <svg width="44" height="144" viewBox="0 0 44 144" className="pointer-events-none absolute top-[108px] left-[212px] z-20" aria-hidden="true">
    <path d="M2 3L31 67.500l-6 2L40 137l-13 3L12 72l-7 2z" fill="#fe0000" />
  </svg>
);

export default function App() {
  return (
    <div className="relative flex h-screen flex-col overflow-hidden bg-[#bfdbff] font-['Open_Sans','Noto_Sans',sans-serif] select-none">
      <Defs />
      <OfficeButton />
      <TitleBar />
      <TabBar />
      <Ribbon />
      <Workspace />
      <StatusBar />
      <Taskbar />
      <PointerArrow />
    </div>
  );
}
